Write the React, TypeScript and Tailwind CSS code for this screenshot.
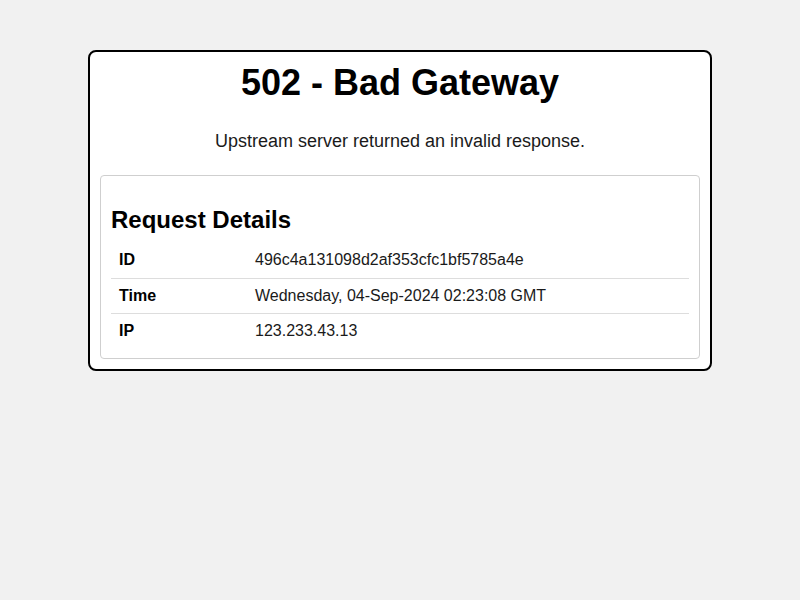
import React from "react";

interface DetailRow {
  label: string;
  value: string;
}

const rows: DetailRow[] = [
  { label: "ID", value: "496c4a131098d2af353cfc1bf5785a4e" },
  { label: "Time", value: "Wednesday, 04-Sep-2024 02:23:08 GMT" },
  { label: "IP", value: "123.233.43.13" },
];

const App: React.FC = () => {
  return (
    <div className="min-h-screen bg-[#f1f1f1] pt-[50px] font-['Liberation_Sans',Arial,sans-serif] text-[#1a1a1a]">
      <div className="mx-auto w-[624px] rounded-[8px] border-2 border-black bg-white p-[10px]">
        <h1 className="m-0 text-center text-[36px] font-bold leading-[41px] text-black">
          502 - Bad Gateway
        </h1>
        <p className="mt-[28px] mb-[23px] text-center text-[18px] leading-[21px]">
          Upstream server returned an invalid response.
        </p>
        <div className="rounded-[4px] border border-[#cfcfcf] px-[10px] pb-[10px] pt-[30px]">
          <h2 className="text-[24px] font-bold leading-[28px] text-black">
            Request Details
          </h2>
          <table className="mt-[9px] w-full border-collapse text-[16px]">
            <tbody>
              {rows.map((row, i) => (
                <tr
                  key={row.label}
                  className={i < rows.length - 1 ? "border-b border-[#dddddd]" : ""}
                >
                  <td className="h-[35px] w-[136px] px-[8px] align-middle font-bold text-black">
                    {row.label}
                  </td>
                  <td className="h-[35px] px-[8px] align-middle">{row.value}</td>
                </tr>
              ))}
            </tbody>
          </table>
        </div>
      </div>
    </div>
  );
};

export default App;
